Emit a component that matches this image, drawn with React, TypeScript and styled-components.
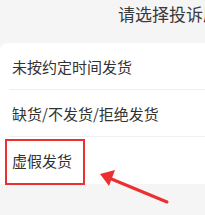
import React from "react";
import styled, { createGlobalStyle } from "styled-components";

const GlobalStyle = createGlobalStyle`
  html, body {
    margin: 0;
    padding: 0;
    background: #f5f5f5;
    overflow: hidden;
  }
  body {
    font-family: "Noto Sans CJK SC", "Noto Sans", sans-serif;
  }
`;

const Screen = styled.div`
  position: relative;
  width: 205px;
  height: 215px;
  overflow: hidden;
  background: #f5f5f5;
`;

const Header = styled.div`
  height: 43px;
  padding-left: 118px;
  padding-bottom: 16px;
  box-sizing: border-box;
  display: flex;
  align-items: center;
  white-space: nowrap;
  font-size: 17px;
  color: #3a3a3a;
  line-height: 1;
`;

const Sheet = styled.div`
  background: #fff;
  border-radius: 8px 0 0 0;
  margin-right: -10px;
`;

const Row = styled.div<{ $last?: boolean }>`
  position: relative;
  height: 47px;
  display: flex;
  align-items: center;
  padding-left: 12px;
  font-size: 15px;
  color: #333;
  &::after {
    content: "";
    display: ${({ $last }) => ($last ? "none" : "block")};
    position: absolute;
    left: 9px;
    right: 0;
    bottom: 0;
    height: 1px;
    background: #efefef;
  }
`;

const Highlight = styled.div`
  position: absolute;
  left: 5px;
  top: 2px;
  width: 80px;
  height: 46px;
  border: 2px solid #ec2f2f;
  box-sizing: border-box;
`;

const Arrow = styled.svg`
  position: absolute;
  left: 0;
  top: 0;
  pointer-events: none;
`;

const reasons = ["未按约定时间发货", "缺货/不发货/拒绝发货", "虚假发货"];

export default function App() {
  return (
    <>
      <GlobalStyle />
      <Screen>
        <Header>请选择投诉原因</Header>
        <Sheet>
          {reasons.map((r, i) => (
            <Row key={r} $last={i === reasons.length - 1}>
              {r}
              {i === 2 && <Highlight />}
            </Row>
          ))}
        </Sheet>
        <Arrow width="205" height="215" viewBox="0 0 205 215">
          <line x1="167" y1="202" x2="109" y2="178" stroke="#ec2f2f" strokeWidth="3" strokeLinecap="round" />
          <polygon points="100,174 115,170 109,186" fill="#ec2f2f" />
        </Arrow>
      </Screen>
    </>
  );
}
